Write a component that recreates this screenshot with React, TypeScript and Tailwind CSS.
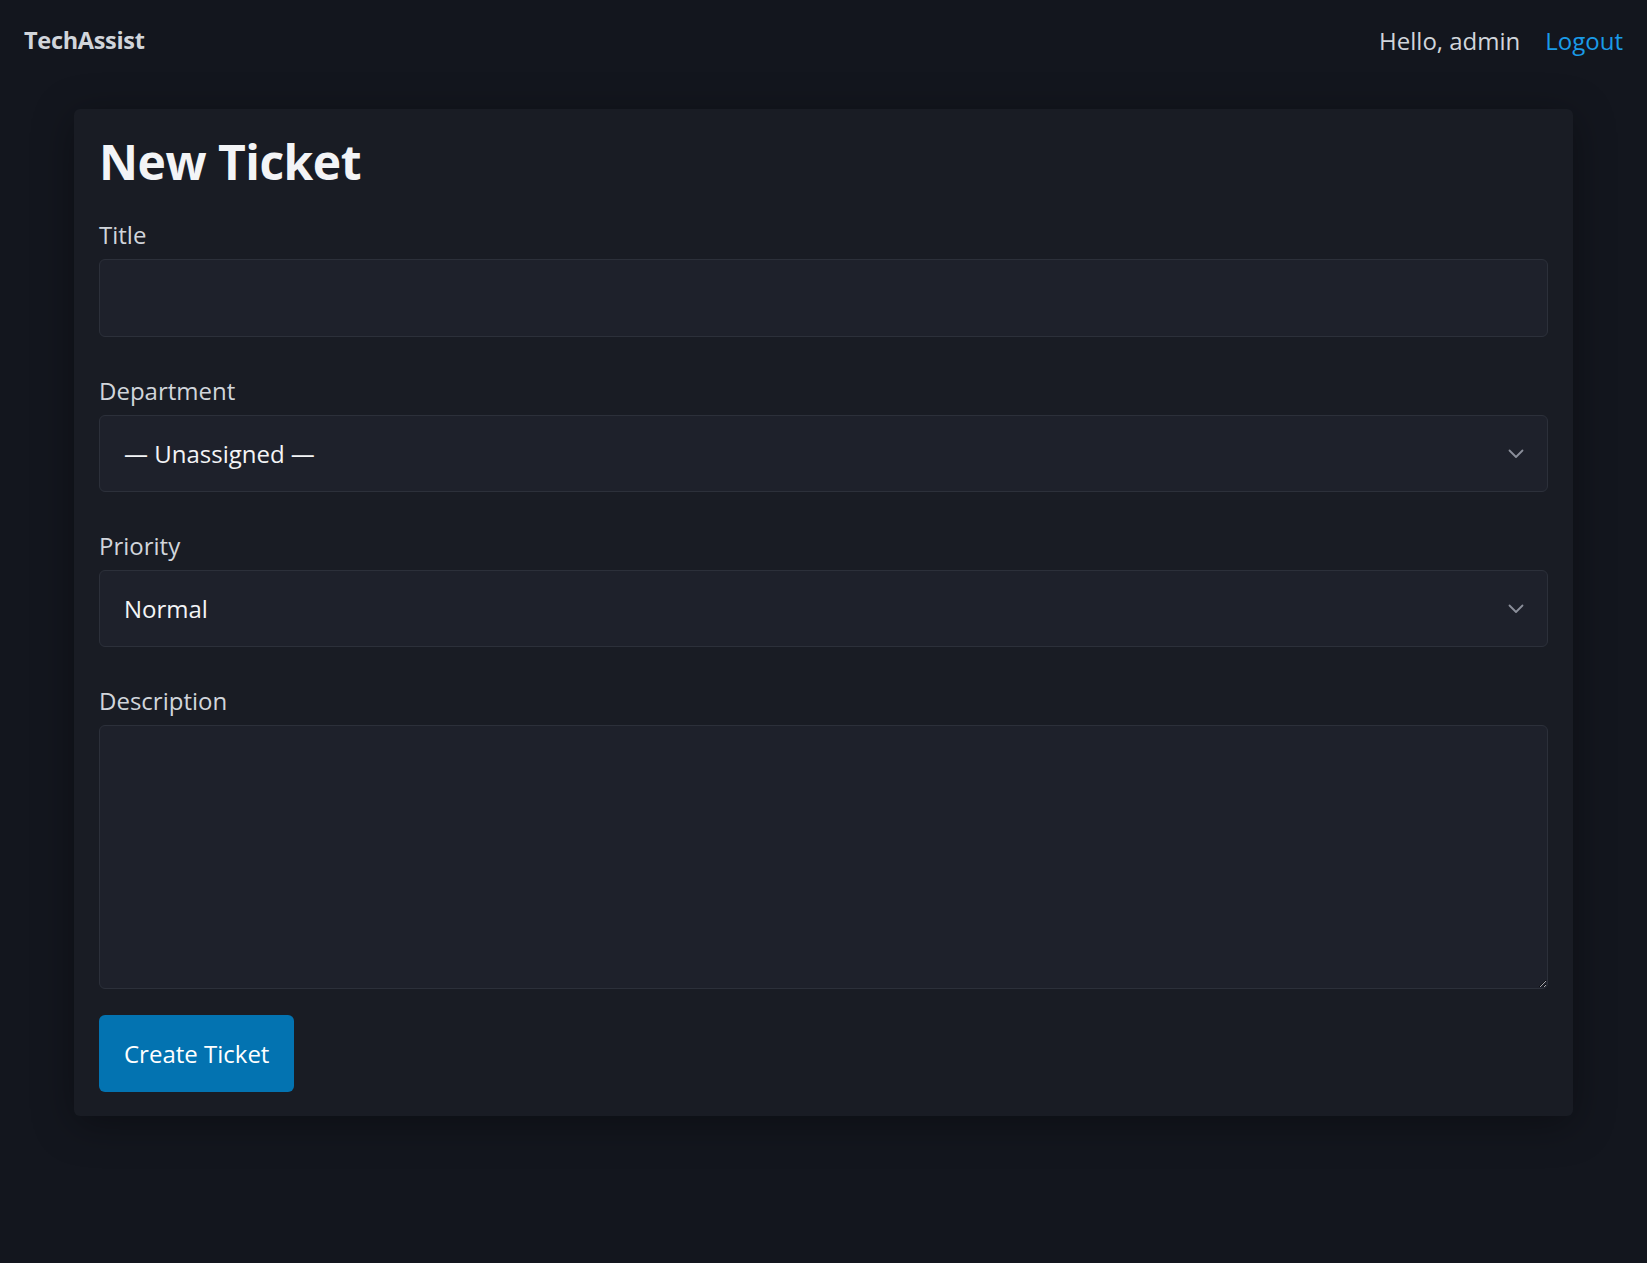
import React from 'react';

const fieldLabel = 'block text-[24px] leading-[32px] text-[#d1d5db] mb-2';
const fieldBox =
  'w-full rounded-md border border-[#2c303a] bg-[#1e212b] text-[24px] text-[#f3f4f6] outline-none';

const Chevron: React.FC = () => (
  <svg
    className="pointer-events-none absolute right-[24px] top-1/2 -translate-y-1/2"
    width="16"
    height="10"
    viewBox="0 0 16 10"
    fill="none"
  >
    <path d="M1.5 1.5L8 8L14.5 1.5" stroke="#8b8f9a" strokeWidth="1.8" strokeLinecap="round" strokeLinejoin="round" />
  </svg>
);

const SelectField: React.FC<{ label: string; value: string; options: string[] }> = ({ label, value, options }) => (
  <div>
    <label className={fieldLabel}>{label}</label>
    <div className="relative">
      <select
        defaultValue={value}
        className={`${fieldBox} h-[77px] appearance-none px-[24px] [color-scheme:dark]`}
      >
        {options.map((o) => (
          <option key={o} value={o}>
            {o}
          </option>
        ))}
      </select>
      <Chevron />
    </div>
  </div>
);

const App: React.FC = () => {
  return (
    <div
      className="min-h-screen bg-[#13161e] text-[#d1d5db]"
      style={{ fontFamily: '"Open Sans", "Noto Sans", sans-serif' }}
    >
      <header className="flex h-[82px] items-center justify-between px-6">
        <div className="text-[23.5px] font-bold text-[#d1d5db] tracking-[-0.3px]">TechAssist</div>
        <div className="flex items-center gap-[25px] text-[24px]">
          <span className="text-[#d1d5db]">Hello, admin</span>
          <a href="#" className="text-[#1a9be8]">
            Logout
          </a>
        </div>
      </header>

      <main className="pt-[27px]">
        <div className="mx-auto w-[1499px] rounded-md bg-[#191c24] px-[25px] pt-[23px] pb-6 shadow-[0_8px_40px_rgba(0,0,0,0.35)]">
          <h1 className="text-[48px] leading-[60px] font-bold text-[#f3f4f6] mb-[27px] tracking-[-0.5px]">New Ticket</h1>

          <form className="flex flex-col gap-[38px]" onSubmit={(e) => e.preventDefault()}>
            <div>
              <label className={fieldLabel}>Title</label>
              <input type="text" className={`${fieldBox} h-[78px] px-[24px]`} />
            </div>

            <SelectField
              label="Department"
              value="— Unassigned —"
              options={['— Unassigned —', 'Hardware', 'Software', 'Network']}
            />

            <SelectField label="Priority" value="Normal" options={['Low', 'Normal', 'High', 'Urgent']} />

            <div>
              <label className={fieldLabel}>Description</label>
              <textarea className={`${fieldBox} block h-[264px] px-[24px] py-3 [color-scheme:dark]`} />
            </div>
          </form>

          <button
            type="submit"
            className="mt-[26px] h-[77px] rounded-md bg-[#0373b1] px-[25px] text-[24px] text-white"
          >
            Create Ticket
          </button>
        </div>
      </main>
    </div>
  );
};

export default App;
